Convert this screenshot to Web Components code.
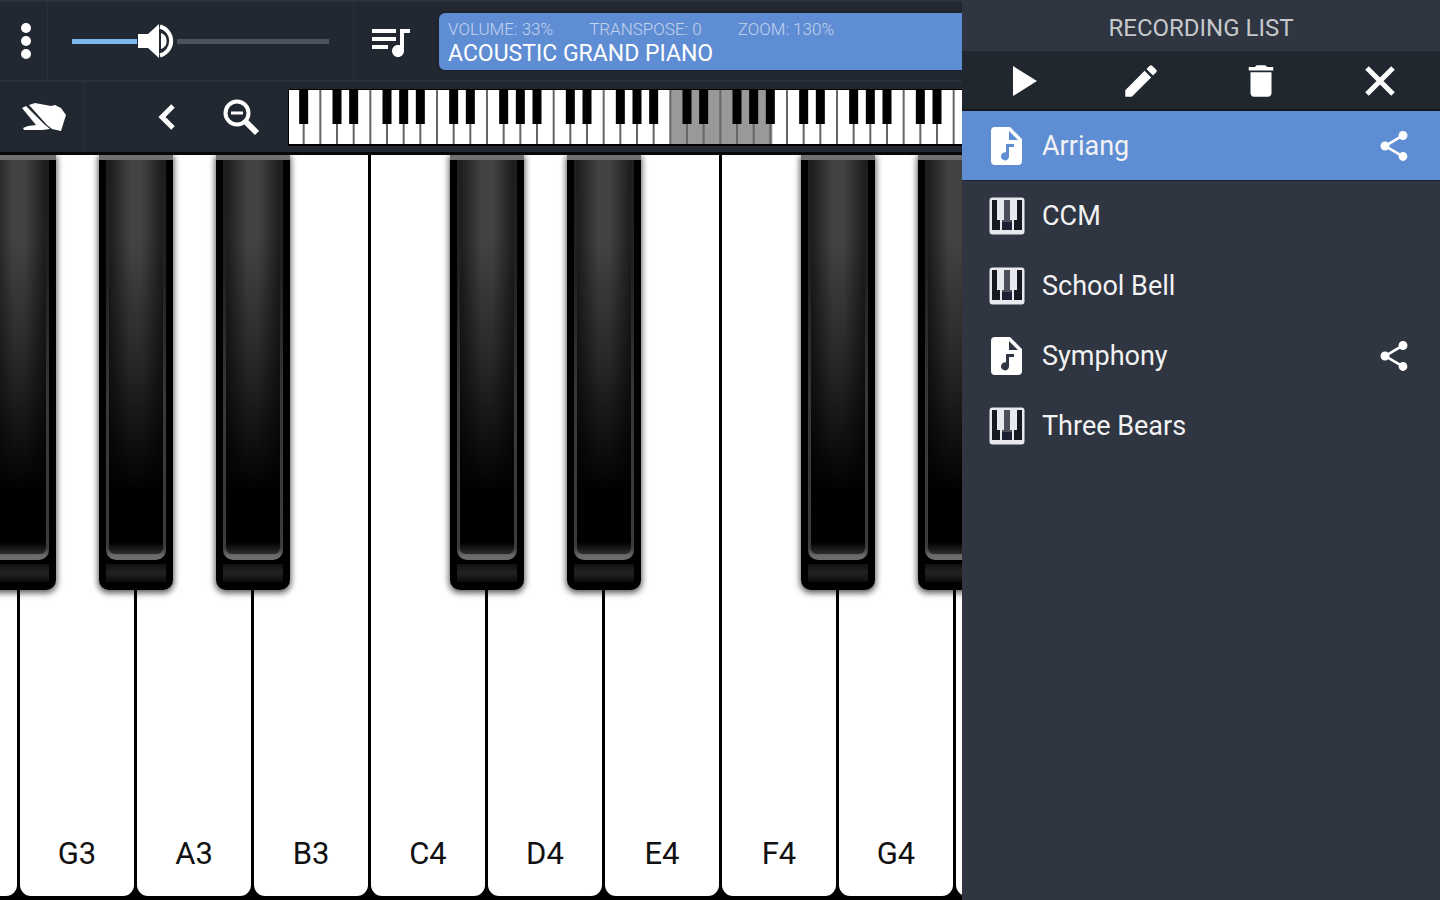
<!DOCTYPE html>
<html lang="en">
<head>
<meta charset="utf-8">
<meta name="viewport" content="width=device-width, initial-scale=1">
<title>Piano</title>
<style>
    body {
        margin: 0;
        background: #000;
        font-family: Roboto, "Liberation Sans", sans-serif;
    }
</style>
</head>
<body>

<piano-app>
    <piano-toolbar slot="toolbar"></piano-toolbar>
    <piano-keyboard slot="keyboard"></piano-keyboard>
    <recording-panel slot="panel">
        <span slot="title">RECORDING LIST</span>
        <recording-item icon="file" selected shareable>Arriang</recording-item>
        <recording-item icon="piano">CCM</recording-item>
        <recording-item icon="piano">School Bell</recording-item>
        <recording-item icon="file" shareable>Symphony</recording-item>
        <recording-item icon="piano">Three Bears</recording-item>
    </recording-panel>
</piano-app>

<script>
const ICONS = {
    menu: [12, 36, '<circle cx="6" cy="5" r="5"/><circle cx="6" cy="18" r="5"/><circle cx="6" cy="31" r="5"/>'],
    queue: [48, 48, '<g transform="scale(2)"><path d="M15 6H3v2h12V6zm0 4H3v2h12v-2zM3 16h8v-2H3v2zM17 6v8.18c-.31-.11-.65-.18-1-.18-1.66 0-3 1.34-3 3s1.34 3 3 3 3-1.34 3-3V8h3V6h-5z"/></g>'],
    hand: [44, 30, '<path d="M7 3l6-2 16 3 4-1 6 3 5 7-5 16-9-2-5-4z"/><path d="M0 6l4-2 18 18 6 5-8 1H2l-1-2 5-2 8-1z"/>'],
    back: [18, 28, '<path d="M15 3 4 14l11 11" fill="none" stroke="#fff" stroke-width="5"/>'],
    zoomOut: [38, 38, '<g fill="none" stroke="#fff"><circle cx="15" cy="15" r="11.5" stroke-width="4"/><path d="M24 24l11 11" stroke-width="6"/><path d="M9 15h12" stroke-width="3"/></g>'],
    play: [52, 52, '<path d="M17 11v30l24-15z"/>'],
    edit: [42, 42, '<g transform="scale(1.75)"><path d="M3 17.25V21h3.75L17.81 9.94l-3.75-3.75L3 17.25zM20.71 7.04a1 1 0 0 0 0-1.41l-2.34-2.34a1 1 0 0 0-1.41 0l-1.83 1.83 3.75 3.75 1.83-1.83z"/></g>'],
    trash: [42, 42, '<g transform="scale(1.75)"><path d="M6 19c0 1.1.9 2 2 2h8c1.1 0 2-.9 2-2V7H6v12zM19 4h-3.5l-1-1h-5l-1 1H5v2h14V4z"/></g>'],
    close: [32, 32, '<path d="M3 3l26 26M29 3 3 29" fill="none" stroke="#fff" stroke-width="5"/>'],
    share: [36, 36, '<g transform="scale(1.5)"><path d="M18 16.08c-.76 0-1.44.3-1.96.77L8.91 12.7c.05-.23.09-.46.09-.7s-.04-.47-.09-.7l7.05-4.11c.54.5 1.25.81 2.04.81 1.66 0 3-1.34 3-3s-1.34-3-3-3-3 1.34-3 3c0 .24.04.47.09.7L8.04 9.81C7.5 9.31 6.79 9 6 9c-1.66 0-3 1.34-3 3s1.34 3 3 3c.79 0 1.5-.31 2.04-.81l7.12 4.16c-.05.21-.08.43-.08.65 0 1.61 1.31 2.92 2.92 2.92s2.92-1.31 2.92-2.92-1.31-2.92-2.92-2.92z"/></g>'],
    file: [36, 38, '<path fill-rule="evenodd" d="M6 0h15l12 12v22q0 4-4 4H6q-4 0-4-4V4q0-4 4-4zM20 4v9h9zM17 17v8.500a4 4 0 1 0 3 4V20h5v-3z"/>'],
    piano: [36, 38, '<rect x=".5" y=".5" width="35" height="37" rx="3" fill="#e8e9ee"/><path d="M3 3h5v20h3v10H3zM28 3h5v30h-8V23h3z" fill="#16191f"/><path d="M15 3h6v20h2v10H13V23h2z" fill="#4a4f5a"/><path d="M13 25h10v8H13z" fill="#1b2033"/>']
}

class AppIcon extends HTMLElement {
    constructor() {
        super()
        this.attachShadow({ mode: "open" })
    }

    connectedCallback() {
        const [w, h, shape] = ICONS[this.getAttribute("name")]
        this.shadowRoot.innerHTML = `
            <style>
                :host { display: inline-flex; flex: none; }
                svg { display: block; fill: #fff; }
            </style>
            <svg width="${w}" height="${h}" viewBox="0 0 ${w} ${h}" aria-hidden="true">${shape}</svg>
        `
    }
}

class PianoApp extends HTMLElement {
    constructor() {
        super()
        this.attachShadow({ mode: "open" })
        this.shadowRoot.innerHTML = `
            <style>
                :host {
                    display: grid;
                    grid-template-columns: minmax(0, 1fr) 478px;
                    min-height: 100vh;
                }
                main {
                    display: flex;
                    flex-direction: column;
                    min-width: 0;
                }
                slot[name="keyboard"]::slotted(*) { flex: 1; }
            </style>
            <main>
                <slot name="toolbar"></slot>
                <slot name="keyboard"></slot>
            </main>
            <slot name="panel"></slot>
        `
    }
}

class PianoToolbar extends HTMLElement {
    constructor() {
        super()
        this.attachShadow({ mode: "open" })
        this.shadowRoot.innerHTML = `
            <style>
                :host {
                    display: block;
                    background: #212831;
                    border-top: 2px solid #2b333e;
                    border-bottom: 3px solid #05080b;
                }
                .row { display: flex; align-items: center; }
                .top { height: 78px; border-bottom: 2px solid #283039; }
                .bottom { height: 70px; }
                button {
                    display: flex;
                    align-items: center;
                    justify-content: center;
                    align-self: stretch;
                    box-sizing: border-box;
                    flex: none;
                    padding: 0;
                    border: 0;
                    background: none;
                    cursor: pointer;
                }
                .menu { width: 48px; padding-left: 4px; border-right: 1px solid #2a313b; }
                .queue { width: 72px; border-left: 1px solid #2a313b; }
                .hand { width: 84px; padding-left: 4px; border-right: 1px solid #262e37; margin-right: 46px; }
                .tool { width: 74px; }
                volume-slider { flex: 0 1 305px; }
                lcd-display { flex: 1; margin-left: 14px; }
                key-overview { flex: 1; margin-left: 11px; }
            </style>
            <div class="row top">
                <button class="menu" aria-label="Menu"><app-icon name="menu"></app-icon></button>
                <volume-slider value="33"></volume-slider>
                <button class="queue" aria-label="Instruments"><app-icon name="queue"></app-icon></button>
                <lcd-display>
                    <span slot="status">VOLUME: 33%</span>
                    <span slot="status">TRANSPOSE: 0</span>
                    <span slot="status">ZOOM: 130%</span>
                    <span slot="sound">ACOUSTIC GRAND PIANO</span>
                </lcd-display>
            </div>
            <div class="row bottom">
                <button class="hand" aria-label="Touch"><app-icon name="hand"></app-icon></button>
                <button class="tool" aria-label="Scroll left"><app-icon name="back"></app-icon></button>
                <button class="tool" aria-label="Zoom out"><app-icon name="zoomOut"></app-icon></button>
                <key-overview></key-overview>
            </div>
        `
    }
}

class VolumeSlider extends HTMLElement {
    constructor() {
        super()
        this.attachShadow({ mode: "open" })
    }

    connectedCallback() {
        const value = this.getAttribute("value")
        this.shadowRoot.innerHTML = `
            <style>
                :host { display: block; padding: 0 5px; box-sizing: border-box; }
                input {
                    --value: ${value};
                    --fill: calc(19px + (100% - 38px) * var(--value) / 100);
                    display: block;
                    width: 100%;
                    height: 40px;
                    margin: 0;
                    appearance: none;
                    background: none;
                }
                input::-webkit-slider-runnable-track {
                    height: 5px;
                    background: linear-gradient(to right, transparent 19px, #7db8ec 19px,
                        #7db8ec calc(var(--fill) - 20px), transparent calc(var(--fill) - 20px),
                        transparent calc(var(--fill) + 20px), #4d535b calc(var(--fill) + 20px),
                        #4d535b calc(100% - 19px), transparent calc(100% - 19px));
                }
                input::-webkit-slider-thumb {
                    appearance: none;
                    width: 38px;
                    height: 36px;
                    margin-top: -16px;
                    background: url("data:image/svg+xml,%3Csvg xmlns='http://www.w3.org/2000/svg' viewBox='0 0 38 36'%3E%3Cpath fill='%23fff' d='M0 11h10L21 1v34L10 25H0zM23 10a8.500 8.500 0 0 1 0 16z'/%3E%3Cpath d='M22 3.500a15 15 0 0 1 0 29' fill='none' stroke='%23fff' stroke-width='4'/%3E%3C/svg%3E") center / 100% 100%;
                }
            </style>
            <input type="range" min="0" max="100" value="${value}" aria-label="Volume">
        `
        const input = this.shadowRoot.querySelector("input")
        input.addEventListener("input", () => input.style.setProperty("--value", input.value))
    }
}

class LcdDisplay extends HTMLElement {
    constructor() {
        super()
        this.attachShadow({ mode: "open" })
        this.shadowRoot.innerHTML = `
            <style>
                :host {
                    display: block;
                    min-width: 0;
                    height: 57px;
                    box-sizing: border-box;
                    padding: 5px 9px;
                    border-radius: 6px 0 0 6px;
                    background: #5f8dd3;
                    box-shadow: 0 0 3px #161b20;
                    white-space: nowrap;
                    overflow: hidden;
                }
                .status {
                    display: flex;
                    gap: 36px;
                    font-size: 17px;
                    line-height: 22px;
                    font-weight: 300;
                    color: #c3d2ee;
                }
                .sound {
                    font-size: 23px;
                    line-height: 28px;
                    color: #fff;
                }
            </style>
            <div class="status"><slot name="status"></slot></div>
            <div class="sound"><slot name="sound"></slot></div>
        `
    }
}

/* Small map of all 88 keys, the visible range is greyed. One white key is 100 units wide. */
class KeyOverview extends HTMLElement {
    constructor() {
        super()
        this.attachShadow({ mode: "open" })
        let whites = ""
        let blacks = ""
        for (let i = 0; i < 52; i++) {
            const note = "ABCDEFG"[i % 7]
            whites += `<path d="M${(i + 1) * 100} 0V324"/>`
            if (note !== "B" && note !== "E" && i < 51) {
                blacks += `<rect x="${(i + 1) * 100 - 27}" width="54" height="204"/>`
            }
        }
        this.shadowRoot.innerHTML = `
            <style>
                :host {
                    display: block;
                    min-width: 0;
                    overflow: hidden;
                    border-top: 1px solid #000;
                    border-bottom: 2px solid #000;
                    box-shadow: -1px 0 #000;
                }
                svg { display: block; height: 54px; }
            </style>
            <svg viewBox="12 0 5188 324" role="img" aria-label="Keyboard range">
                <rect width="5200" height="324" fill="#fff"/>
                <rect x="2300" width="612" height="324" fill="#999"/>
                <g stroke="#666" stroke-width="12">${whites}</g>
                ${blacks}
            </svg>
        `
    }
}

class PianoKeyboard extends HTMLElement {
    constructor() {
        super()
        this.attachShadow({ mode: "open" })
        const notes = ["F3", "G3", "A3", "B3", "C4", "D4", "E4", "F4", "G4", "A4"]
        const keys = notes.map((note, i) => {
            const sharp = /[BE]/.test(note) ? "" : "sharp"
            /* the outer keys are only partly in view and carry no label */
            const plain = i === 0 || i === notes.length - 1 ? "plain" : ""
            return `<piano-key note="${note}" ${sharp} ${plain}></piano-key>`
        }).join("")
        this.shadowRoot.innerHTML = `
            <style>
                :host { display: flex; overflow: hidden; background: #000; }
                .keys { display: flex; margin-left: -98px; }
            </style>
            <div class="keys">${keys}</div>
        `
    }
}

class PianoKey extends HTMLElement {
    constructor() {
        super()
        this.attachShadow({ mode: "open" })
    }

    connectedCallback() {
        const note = this.getAttribute("note")
        this.shadowRoot.innerHTML = `
            <style>
                :host {
                    display: flex;
                    position: relative;
                    flex: 0 0 117px;
                    padding: 0 2px 4px 1px;
                    box-sizing: border-box;
                }
                button { font-family: inherit; border: 0; cursor: pointer; }
                .white {
                    display: flex;
                    flex: 1;
                    align-items: flex-end;
                    justify-content: center;
                    padding: 0 0 24px;
                    border-radius: 0 0 11px 11px;
                    background: #fff;
                    color: #111;
                    font-size: 31px;
                    line-height: 36px;
                }
                /* sits across the joint with the next white key */
                .black {
                    position: absolute;
                    z-index: 1;
                    top: 0;
                    right: -37px;
                    width: 74px;
                    height: calc(58% + 3px);
                    display: flex;
                    flex-direction: column;
                    padding: 0 7px 8px;
                    box-sizing: border-box;
                    border-top: 5px solid #707070;
                    border-radius: 0 0 10px 10px;
                    background: #000;
                    box-shadow: 0 2px 6px 1px rgba(0, 0, 0, 0.65);
                }
                .face {
                    display: flex;
                    flex: 1;
                    padding: 0 3px 6px;
                    border-radius: 0 0 10px 10px;
                    background: linear-gradient(#1e1e1e, #222 30%, #383838 60%, #3c3c3c 97%, #6c6c6c 99%);
                }
                .face::before {
                    content: "";
                    flex: 1;
                    border-radius: 0 0 6px 6px;
                    background:
                        linear-gradient(to bottom, transparent calc(100% - 12px), #2c2c2c),
                        linear-gradient(to bottom, transparent 20%, rgba(0, 0, 0, 0.4) 50%, #000 85%),
                        linear-gradient(to right, #1c1c1c, #434343 40%, #434343 60%, #1c1c1c);
                }
                .lip {
                    height: 18px;
                    margin-top: 4px;
                    background: linear-gradient(#111, #222 50%, #0c0c0c);
                }
            </style>
            <button class="white" aria-label="${note}">${this.hasAttribute("plain") ? "" : note}</button>
            ${this.hasAttribute("sharp") ? `
                <button class="black" aria-label="${note} sharp">
                    <span class="face"></span>
                    <span class="lip"></span>
                </button>` : ""}
        `
    }
}

class RecordingPanel extends HTMLElement {
    constructor() {
        super()
        this.attachShadow({ mode: "open" })
        this.shadowRoot.innerHTML = `
            <style>
                :host {
                    display: block;
                    position: relative;
                    z-index: 2;
                    background: #2f3541;
                    color: #f2f2f3;
                }
                h1 {
                    margin: 0;
                    padding: 12px 0 7px;
                    font-size: 24px;
                    line-height: 32px;
                    font-weight: 400;
                    text-align: center;
                    color: #c6c8cb;
                }
                .actions {
                    display: flex;
                    height: 58px;
                    background: #21272f;
                    border-bottom: 2px solid #15191d;
                }
                button {
                    display: flex;
                    flex: 1;
                    align-items: center;
                    justify-content: center;
                    padding: 2px 0 0;
                    border: 0;
                    background: none;
                    cursor: pointer;
                }
            </style>
            <h1><slot name="title"></slot></h1>
            <div class="actions">
                <button aria-label="Play"><app-icon name="play"></app-icon></button>
                <button aria-label="Rename"><app-icon name="edit"></app-icon></button>
                <button aria-label="Delete"><app-icon name="trash"></app-icon></button>
                <button aria-label="Close"><app-icon name="close"></app-icon></button>
            </div>
            <div role="list"><slot></slot></div>
        `
        this.addEventListener("click", this.selectItem.bind(this))
    }

    selectItem(event) {
        const item = event.target.closest("recording-item")
        if (!item) {
            return
        }
        this.querySelectorAll("recording-item").forEach(el => el.toggleAttribute("selected", el === item))
    }
}

class RecordingItem extends HTMLElement {
    constructor() {
        super()
        this.attachShadow({ mode: "open" })
    }

    connectedCallback() {
        this.setAttribute("role", "listitem")
        this.shadowRoot.innerHTML = `
            <style>
                :host {
                    display: flex;
                    height: 70px;
                    box-sizing: border-box;
                    border-bottom: 1px solid transparent;
                }
                :host([selected]) { background: #5f8dd3; border-bottom-color: #1d2328; }
                button {
                    display: flex;
                    align-items: center;
                    padding: 0;
                    border: 0;
                    background: none;
                    color: inherit;
                    font-family: inherit;
                    cursor: pointer;
                }
                .name {
                    flex: 1;
                    gap: 17px;
                    padding-left: 27px;
                    font-size: 27px;
                    line-height: 32px;
                    text-align: left;
                }
                .share { justify-content: center; width: 92px; }
            </style>
            <button class="name">
                <app-icon name="${this.getAttribute("icon")}"></app-icon>
                <span><slot></slot></span>
            </button>
            ${this.hasAttribute("shareable") ? `
                <button class="share" aria-label="Share"><app-icon name="share"></app-icon></button>` : ""}
        `
    }
}

customElements.define('app-icon', AppIcon)
customElements.define('piano-app', PianoApp)
customElements.define('volume-slider', VolumeSlider)
customElements.define('lcd-display', LcdDisplay)
customElements.define('key-overview', KeyOverview)
customElements.define('piano-toolbar', PianoToolbar)
customElements.define('piano-key', PianoKey)
customElements.define('piano-keyboard', PianoKeyboard)
customElements.define('recording-item', RecordingItem)
customElements.define('recording-panel', RecordingPanel)
</script>
</body>
</html>
